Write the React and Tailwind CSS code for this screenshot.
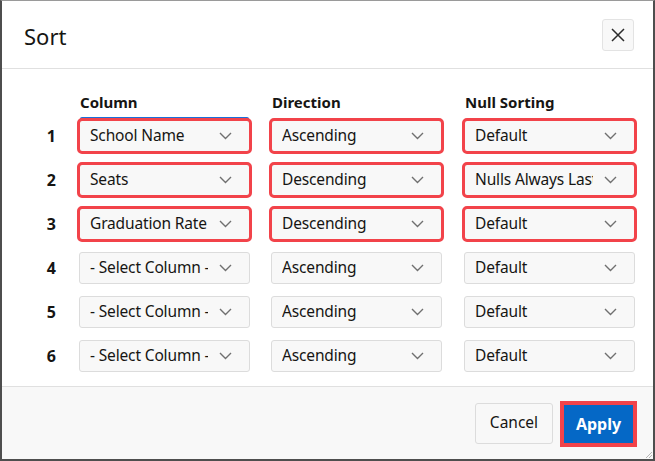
import React from 'react';

const rows = [
  { n: 1, col: 'School Name', dir: 'Ascending', nul: 'Default', marked: true, focus: true },
  { n: 2, col: 'Seats', dir: 'Descending', nul: 'Nulls Always Last', marked: true },
  { n: 3, col: 'Graduation Rate', dir: 'Descending', nul: 'Default', marked: true },
  { n: 4, col: '- Select Column -', dir: 'Ascending', nul: 'Default' },
  { n: 5, col: '- Select Column -', dir: 'Ascending', nul: 'Default' },
  { n: 6, col: '- Select Column -', dir: 'Ascending', nul: 'Default' },
];

const Chevron = () => (
  <svg width="13" height="8" viewBox="0 0 13 8" fill="none" className="shrink-0">
    <path d="M1 1l5.5 5.5L12 1" stroke="#707070" strokeWidth="1.4" />
  </svg>
);

const Select = ({ value, marked, focus, className = '' }) => (
  <div
    className={`relative flex items-center h-8 w-[171px] bg-[#f8f8f8] border border-[#dcdcdc] rounded-[3px] pl-[10px] pr-[17px] ${
      marked ? 'outline-[3px] outline-solid outline-[#f2434a] outline-offset-[-1px]' : ''
    } ${focus ? 'shadow-[0_-4px_0_-1px_#1a6fd9]' : ''} ${className}`}
  >
    <span className="flex-1 min-w-0 mr-[11px] overflow-hidden whitespace-nowrap text-[15.5px] tracking-[-0.15px] text-[#161513]">
      {value}
    </span>
    <Chevron />
  </div>
);

export default function App() {
  return (
    <div
      className="relative w-[655px] h-[461px] flex flex-col bg-white border-l-2 border-r-2 border-b-2 border-t border-[#4e4e4e] border-t-[#9a9a9a]"
      style={{ fontFamily: '"Noto Sans", "Open Sans", sans-serif' }}
    >
      {/* header */}
      <div className="h-[68px] shrink-0 flex items-center justify-between pl-[22px] pr-[19px] border-b border-[#e0e0e0]">
        <h1 className="text-[22px] text-[#161513] leading-none mt-[2px]">Sort</h1>
        <button className="w-8 h-8 flex items-center justify-center bg-[#f8f8f8] border border-[#e3e3e3] rounded-[3px]">
          <svg width="16" height="16" viewBox="0 0 16 16" fill="none">
            <path d="M2 2l12 12M14 2L2 14" stroke="#2b2b2b" strokeWidth="1.5" />
          </svg>
        </button>
      </div>

      {/* body */}
      <div className="flex-1 pt-[23px]">
        <div className="flex items-center h-5 mb-[8px] text-[15px] font-bold text-[#161513]">
          <div className="w-[78px]" />
          <div className="w-[171px]">Column</div>
          <div className="w-[171px] ml-[21px]">Direction</div>
          <div className="w-[171px] ml-[22px]">Null Sorting</div>
        </div>
        <div className="flex flex-col gap-3">
          {rows.map((r) => (
            <div key={r.n} className="flex items-center">
              <div className="w-[77px] pr-[23px] text-right text-[16px] font-bold text-[#161513]">{r.n}</div>
              <Select value={r.col} marked={r.marked} focus={r.focus} />
              <Select value={r.dir} marked={r.marked} className="ml-[21px]" />
              <Select value={r.nul} marked={r.marked} className="ml-[22px]" />
            </div>
          ))}
        </div>
      </div>

      {/* footer */}
      <div className="h-[73px] shrink-0 flex items-center justify-end pr-[20px] bg-[#f8f8f8] border-t border-[#e0e0e0]">
        <button className="h-[41px] w-[78px] bg-[#f8f8f8] border border-[#dcdcdc] rounded-[3px] text-[15.5px] text-[#161513]">
          Cancel
        </button>
        <button className="ml-[11px] mt-[2px] h-[38px] w-[69px] bg-[#0568c6] text-white text-[16px] font-bold outline-4 outline-solid outline-[#f2434a]">
          Apply
        </button>
      </div>

      <svg className="absolute right-0 bottom-0" width="9" height="9" viewBox="0 0 9 9">
        <path d="M8 2L2 8M8 5L5 8" stroke="#b5b5b5" strokeWidth="1" />
      </svg>
    </div>
  );
}
